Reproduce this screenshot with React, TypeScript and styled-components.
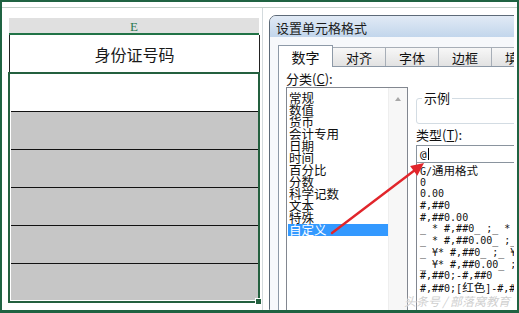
import React from 'react'
import styled, { createGlobalStyle } from 'styled-components'

const GlobalStyle = createGlobalStyle`
  body {
    margin: 0;
    background: #fff;
    font-family: 'Noto Sans CJK SC', 'Noto Sans', sans-serif;
  }
`

const Frame = styled.div`
  background: #fff;
  border: 2px solid #1f6342;
  border-bottom-width: 3px;
  box-sizing: border-box;
  display: flex;
  flex-direction: column;
  height: 313px;
  overflow: hidden;
  position: relative;
  width: 519px;
`

const TopStrip = styled.div`
  border-bottom: 1px solid #c3cfc9;
  flex: none;
  height: 5px;
`

const Workspace = styled.div`
  display: flex;
  flex: 1;
  margin-right: 3px;
  min-height: 0;
  overflow: hidden;
`

const Sheet = styled.div`
  border-right: 1px solid #d3dadd;
  box-sizing: border-box;
  display: flex;
  flex: none;
  flex-direction: column;
  padding-left: 6px;
  width: 261px;
`

const ColumnHeader = styled.div`
  background: #e0e0e0;
  border-bottom: 2px solid #217346;
  color: #2d7a50;
  font-family: 'Liberation Serif', serif;
  font-size: 13px;
  height: 15px;
  line-height: 17px;
  margin: 10px 0 0 1px;
  text-align: center;
  width: 250px;
`

const HeaderCell = styled.div`
  border-left: 1px solid #222;
  border-right: 1px solid #222;
  box-sizing: border-box;
  color: #1a1a1a;
  font-size: 16px;
  height: 37px;
  line-height: 38px;
  margin-left: 1px;
  text-align: center;
  width: 251px;
`

const Selection = styled.div`
  border: 2px solid #24603f;
  box-sizing: border-box;
  display: flex;
  flex-direction: column;
  height: 231px;
  padding: 0 0 1px 1px;
  position: relative;
  width: 252px;
`

const Row = styled.div<{ $filled: boolean; $last?: boolean }>`
  background: ${(p) => (p.$filled ? '#c6c6c6' : '#fff')};
  border-bottom: ${(p) => (p.$last ? 'none' : '1px solid #111')};
  flex: ${(p) => (p.$last ? '1' : 'none')};
  height: ${(p) => (p.$last ? 'auto' : '37px')};
`

const FillHandle = styled.span`
  background: #24603f;
  border: 1px solid #fff;
  bottom: -4px;
  height: 5px;
  position: absolute;
  right: -4px;
  width: 5px;
`

const Dialog = styled.div`
  background: #eef2f7;
  border: 1px solid #5d6a78;
  border-radius: 7px 7px 0 0;
  display: flex;
  flex: none;
  flex-direction: column;
  margin: 7px 0 0 6px;
  width: 300px;
`

const TitleBar = styled.div`
  background: linear-gradient(#e1eaf5, #c2d6ec);
  border-radius: 6px 6px 0 0;
  color: #1c1c1c;
  font-size: 13px;
  height: 21px;
  line-height: 23px;
  padding-left: 6px;
`

const Client = styled.div`
  background: #f6f8fb;
  flex: 1;
  padding: 8px 0 0 8px;
`

const Tabs = styled.div`
  align-items: flex-end;
  display: flex;
  height: 21px;
`

const Tab = styled.div<{ $active?: boolean }>`
  background: ${(p) => (p.$active ? '#fff' : 'linear-gradient(#f7f7f7, #e2e2e2)')};
  border: 1px solid ${(p) => (p.$active ? '#8d99a7' : '#a7aeb7')};
  border-bottom: none;
  border-left: ${(p) => (p.$active ? '1px solid #8d99a7' : 'none')};
  box-sizing: border-box;
  color: #111;
  flex: none;
  font-size: ${(p) => (p.$active ? '14px' : '13px')};
  height: ${(p) => (p.$active ? '22px' : '19px')};
  line-height: ${(p) => (p.$active ? '22px' : '19px')};
  margin-bottom: ${(p) => (p.$active ? '-1px' : '0')};
  position: relative;
  text-align: center;
  width: ${(p) => (p.$active ? '55px' : '53px')};
  z-index: ${(p) => (p.$active ? 1 : 0)};
`

const Panel = styled.div`
  background: #fff;
  border: 1px solid #8d99a7;
  display: flex;
  height: 260px;
  padding: 5px 0 0 7px;
`

const LeftColumn = styled.div`
  display: flex;
  flex: none;
  flex-direction: column;
`

const FieldLabel = styled.div`
  color: #111;
  font-size: 13px;
  height: 14px;
  line-height: 14px;
  white-space: pre;
`

const ListBox = styled.div`
  border: 1px solid #828790;
  display: flex;
  height: 240px;
  margin-top: 1px;
  width: 120px;
`

const Items = styled.div`
  flex: 1;
  padding-top: 4px;
`

const Item = styled.div<{ $selected?: boolean }>`
  background: ${(p) => (p.$selected ? '#3399ff' : 'transparent')};
  color: ${(p) => (p.$selected ? '#fff' : '#111')};
  font-size: 12.5px;
  height: 12px;
  line-height: 12px;
  margin-left: 1px;
  padding-left: 1px;
  white-space: nowrap;
`

const ScrollBar = styled.div`
  background: #f7f7f7;
  border-left: 1px solid #eee;
  flex: none;
  width: 18px;
`

const UpArrow = styled.div`
  border-bottom: 4px solid #a8a8a8;
  border-left: 3px solid transparent;
  border-right: 3px solid transparent;
  height: 0;
  margin: 9px auto 0;
  width: 0;
`

const RightColumn = styled.div`
  display: flex;
  flex: none;
  flex-direction: column;
  margin-left: 8px;
  padding-top: 20px;
  width: 160px;
`

const Sample = styled.fieldset`
  border: 1px solid #d3dce3;
  border-radius: 3px;
  box-sizing: border-box;
  height: 32px;
  margin: 0;
  padding: 0 5px;
`

const SampleLegend = styled.legend`
  color: #111;
  font-size: 13px;
  line-height: 12px;
  padding: 0 2px;
`

const TypeInput = styled.div`
  align-items: center;
  border: 1px solid #8a949e;
  display: flex;
  font-family: 'DejaVu Sans Mono', monospace;
  font-size: 11px;
  height: 16px;
  margin-top: 3px;
  padding-left: 3px;
`

const Caret = styled.span`
  background: #000;
  display: inline-block;
  height: 12px;
  margin-left: 1px;
  width: 1px;
`

const TypeList = styled.div`
  border: 1px solid #828790;
  border-top: none;
  color: #111;
  font-family: 'DejaVu Sans Mono', 'Noto Sans CJK SC', monospace;
  font-size: 10px;
  height: 160px;
  padding: 2px 0 0 3px;
`

const TypeItem = styled.div`
  height: 11.7px;
  line-height: 11.7px;
  white-space: pre;
`

const Han = styled.span`
  font-family: 'Noto Sans CJK SC', sans-serif;
  font-size: 11.5px;
`

const Watermark = styled.div`
  bottom: 1px;
  color: rgba(190, 190, 190, 0.75);
  font-size: 12px;
  font-style: italic;
  line-height: 16px;
  position: absolute;
  right: 7px;
  text-shadow: 0 0 2px #fff, 0 0 1px #fff;
  white-space: pre;
`

const Overlay = styled.svg`
  left: -2px;
  pointer-events: none;
  position: absolute;
  top: -2px;
`

const categories = ['常规', '数值', '货币', '会计专用', '日期', '时间', '百分比', '分数', '科学记数', '文本', '特殊', '自定义']

const formats: React.ReactNode[] = [
  <>G/<Han>通用格式</Han></>,
  '0',
  '0.00',
  '#,##0',
  '#,##0.00',
  '_ * #,##0_ ;_ * -#,##0_ ;_ * "-"_ ;_ @_ ',
  '_ * #,##0.00_ ;_ * -#,##0.00_ ;_ * "-"??_ ;_ @_ ',
  '_ ¥* #,##0_ ;_ ¥* -#,##0_ ;_ ¥* "-"_ ;_ @_ ',
  '_ ¥* #,##0.00_ ;_ ¥* -#,##0.00_ ;_ ¥* "-"??_ ;_ @_ ',
  '#,##0;-#,##0',
  <>#,##0;[<Han>红色</Han>]-#,##0</>,
]

const tabs = ['数字', '对齐', '字体', '边框', '填充']

export default function App() {
  return (
    <>
      <GlobalStyle />
      <Frame>
        <TopStrip />
        <Workspace>
          <Sheet>
            <ColumnHeader>E</ColumnHeader>
            <HeaderCell>身份证号码</HeaderCell>
            <Selection>
              {[0, 1, 2, 3, 4, 5].map((i) => (
                <Row key={i} $filled={i > 0} $last={i === 5} />
              ))}
              <FillHandle />
            </Selection>
          </Sheet>
          <Dialog>
            <TitleBar>设置单元格格式</TitleBar>
            <Client>
              <Tabs>
                {tabs.map((t, i) => (
                  <Tab key={t} $active={i === 0}>
                    {t}
                  </Tab>
                ))}
              </Tabs>
              <Panel>
                <LeftColumn>
                  <FieldLabel>
                    分类(<u>C</u>):
                  </FieldLabel>
                  <ListBox>
                    <Items>
                      {categories.map((c) => (
                        <Item key={c} $selected={c === '自定义'}>
                          {c}
                        </Item>
                      ))}
                    </Items>
                    <ScrollBar>
                      <UpArrow />
                    </ScrollBar>
                  </ListBox>
                </LeftColumn>
                <RightColumn>
                  <Sample>
                    <SampleLegend>示例</SampleLegend>
                  </Sample>
                  <FieldLabel style={{ marginTop: 4 }}>
                    类型(<u>T</u>):
                  </FieldLabel>
                  <TypeInput>
                    @<Caret />
                  </TypeInput>
                  <TypeList>
                    {formats.map((f, i) => (
                      <TypeItem key={i}>{f}</TypeItem>
                    ))}
                  </TypeList>
                </RightColumn>
              </Panel>
            </Client>
          </Dialog>
        </Workspace>
        <Watermark>头条号 / 部落窝教育</Watermark>
        <Overlay width="519" height="313" viewBox="0 0 519 313">
          <line x1="332" y1="233" x2="415" y2="170" stroke="#e1252b" strokeWidth="2.4" strokeLinecap="round" />
          <polygon points="424,163 417.3,175.7 410.1,166.1" fill="#e1252b" />
        </Overlay>
      </Frame>
    </>
  )
}
